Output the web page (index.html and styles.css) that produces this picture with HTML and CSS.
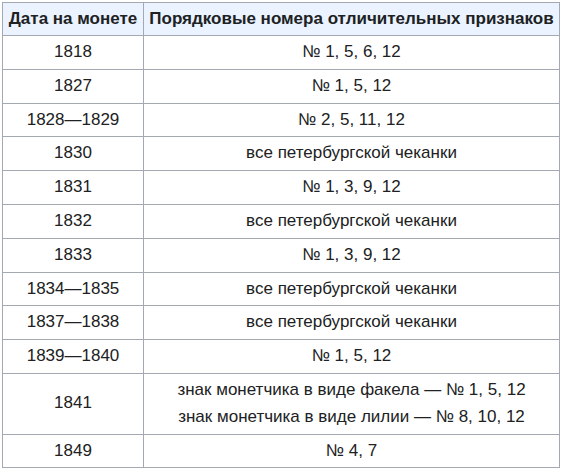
FILE: index.html
```html
<!DOCTYPE html>
<html>
<head>
<meta charset="utf-8">
<link rel="stylesheet" href="styles.css">
</head>
<body>
<table class="wikitable">
<thead>
<tr><th class="c1">Дата на монете</th><th class="c2">Порядковые номера отличительных признаков</th></tr>
</thead>
<tbody>
<tr><td>1818</td><td>№ 1, 5, 6, 12</td></tr>
<tr><td>1827</td><td>№ 1, 5, 12</td></tr>
<tr><td>1828—1829</td><td>№ 2, 5, 11, 12</td></tr>
<tr><td>1830</td><td>все петербургской чеканки</td></tr>
<tr><td>1831</td><td>№ 1, 3, 9, 12</td></tr>
<tr><td>1832</td><td>все петербургской чеканки</td></tr>
<tr><td>1833</td><td>№ 1, 3, 9, 12</td></tr>
<tr><td>1834—1835</td><td>все петербургской чеканки</td></tr>
<tr><td>1837—1838</td><td>все петербургской чеканки</td></tr>
<tr><td>1839—1840</td><td>№ 1, 5, 12</td></tr>
<tr><td>1841</td><td>знак монетчика в виде факела — № 1, 5, 12<br>знак монетчика в виде лилии — № 8, 10, 12</td></tr>
<tr><td>1849</td><td>№ 4, 7</td></tr>
</tbody>
</table>
</body>
</html>
```
FILE: styles.css
```css
html, body {
  margin: 0;
  padding: 0;
  background: #ffffff;
}
body {
  padding: 2px 0 0 2px;
  font-family: "Liberation Sans", Arial, sans-serif;
  font-size: 17px;
  color: #202122;
}
.wikitable {
  border-collapse: collapse;
  border: 1px solid #a2a9b1;
  background: #ffffff;
  table-layout: fixed;
  width: 558px;
}
.wikitable th,
.wikitable td {
  border: 1px solid #a2a9b1;
  padding: 3px 6px;
  line-height: 26.8px;
  text-align: center;
  vertical-align: middle;
}
.wikitable th {
  background: #eaf3ff;
  font-weight: bold;
  line-height: 26px;
  white-space: nowrap;
  padding: 3px 4px;
}
.wikitable .c1 { width: 132px; }
.wikitable .c2 { width: auto; }
```
